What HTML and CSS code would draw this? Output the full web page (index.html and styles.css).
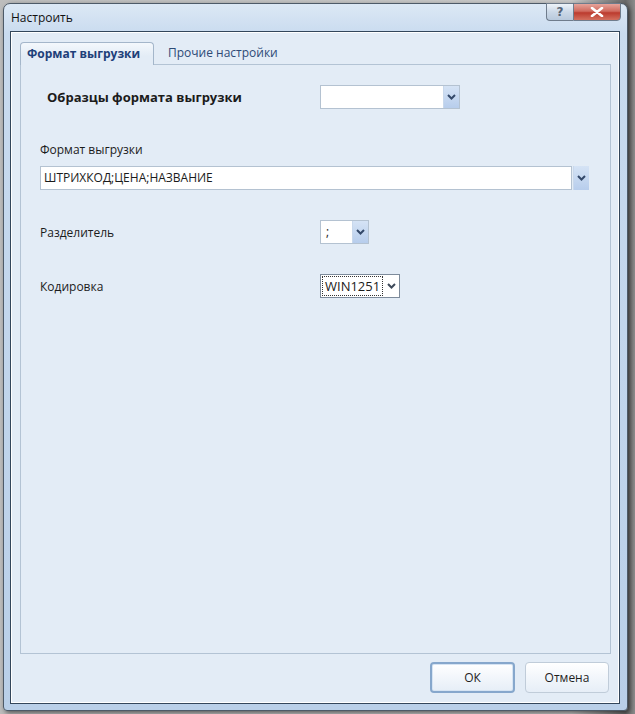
FILE: index.html
```html
<!DOCTYPE html>
<html lang="ru">
<head>
  <meta charset="UTF-8">
  <title>Настроить</title>
  <link rel="stylesheet" href="styles.css">
</head>
<body>

<div class="window">
  <!-- Title bar -->
  <div class="titlebar">
    <span class="title">Настроить</span>
    <div class="caption-buttons">
      <span class="cap-btn help">?</span>
      <span class="cap-btn close">
        <svg width="14" height="10" viewBox="0 0 14 10"><path d="M2 1 L12 9 M12 1 L2 9" stroke="#fff" stroke-width="2.6" stroke-linecap="round"/></svg>
      </span>
    </div>
  </div>

  <div class="client">
    <!-- Tabs -->
    <div class="tabs">
      <span class="tab active">Формат выгрузки</span>
      <span class="tab">Прочие настройки</span>
    </div>

    <div class="panel">
      <div class="row row-sample">
        <span class="label bold">Образцы формата выгрузки</span>
        <div class="combo combo-sample">
          <span class="combo-text"></span>
          <span class="drop"><svg width="9" height="6" viewBox="0 0 9 6"><path d="M1 1 L4.5 4.5 L8 1" fill="none" stroke="#34496a" stroke-width="2"/></svg></span>
        </div>
      </div>

      <div class="field-label">Формат выгрузки</div>
      <div class="format-line">
        <div class="text-input">ШТРИХКОД;ЦЕНА;НАЗВАНИЕ</div>
        <span class="drop drop-alone"><svg width="9" height="6" viewBox="0 0 9 6"><path d="M1 1 L4.5 4.5 L8 1" fill="none" stroke="#34496a" stroke-width="2"/></svg></span>
      </div>

      <div class="row row-sep">
        <span class="label">Разделитель</span>
        <div class="combo combo-sep">
          <span class="combo-text">;</span>
          <span class="drop"><svg width="9" height="6" viewBox="0 0 9 6"><path d="M1 1 L4.5 4.5 L8 1" fill="none" stroke="#34496a" stroke-width="2"/></svg></span>
        </div>
      </div>

      <div class="row row-enc">
        <span class="label">Кодировка</span>
        <div class="combo combo-enc">
          <span class="combo-text focus">WIN1251</span>
          <span class="drop plain"><svg width="9" height="6" viewBox="0 0 9 6"><path d="M1 1 L4.5 4.5 L8 1" fill="none" stroke="#3e4a5a" stroke-width="2"/></svg></span>
        </div>
      </div>
    </div>

    <!-- Dialog buttons -->
    <div class="footer">
      <span class="btn default">ОК</span>
      <span class="btn">Отмена</span>
    </div>
  </div>
</div>

</body>
</html>
```

FILE: styles.css
```css
/* Page reset */
html, body {
  margin: 0;
  padding: 0;
}

body {
  width: 635px;
  height: 714px;
  overflow: hidden;
  background: linear-gradient(to right, #bdbdbd 0%, #c9c9c9 90%, #6a6a6a 98.5%, #8c8c8c 100%);
  font-family: 'Open Sans', 'Noto Sans', sans-serif;
  font-size: 12px;
  color: #1b1b1b;
  padding: 3px 0 0 3px;
  box-sizing: border-box;
}

/* Window frame */
.window {
  width: 625px;
  height: 708px;
  box-sizing: border-box;
  border: 1px solid #4d5a68;
  border-radius: 7px 7px 4px 4px;
  background: linear-gradient(to bottom, #dce8f5 0px, #c9dbef 30px, #b9cfe8 100%);
  box-shadow: 2px 2px 5px rgba(0, 0, 0, 0.55);
  display: flex;
  flex-direction: column;
}

.titlebar {
  height: 27px;
  display: flex;
  justify-content: space-between;
  align-items: flex-start;
  padding: 0 6px 0 7px;
}

.title {
  font-size: 12px;
  line-height: 27px;
  color: #111;
}

.caption-buttons {
  display: flex;
  margin-top: -1px;
}

.cap-btn {
  height: 18px;
  box-sizing: border-box;
  border: 1px solid #6f7c8c;
  display: flex;
  align-items: center;
  justify-content: center;
}

.cap-btn.help {
  width: 27px;
  border-right: none;
  border-radius: 0 0 0 4px;
  background: linear-gradient(to bottom, #eef3f9, #cbd8e7 50%, #b8c9dc);
  color: #556477;
  font-family: 'DejaVu Sans', sans-serif;
  font-weight: bold;
  font-size: 12px;
}

.cap-btn.close {
  width: 48px;
  border-radius: 0 0 4px 0;
  background: linear-gradient(to bottom, #e6a49b, #d06a5e 45%, #bc3b2e 55%, #d3705f);
}

/* Client area */
.client {
  flex: 1;
  margin: 0 7px 6px 6px;
  border: 1px solid #33465b;
  box-shadow: inset 0 0 0 1px #ffffff;
  background: #e3ecf6;
  padding: 10px 8px 10px 9px;
  display: flex;
  flex-direction: column;
}

.tabs {
  display: flex;
  height: 22px;
  position: relative;
  z-index: 1;
}

.tab {
  padding: 0 7px;
  line-height: 21px;
  color: #2d4a76;
  font-size: 12px;
}

.tab.active {
  width: 134px;
  box-sizing: border-box;
  padding: 0 6px;
  height: 23px;
  border: 1px solid #a4b6ca;
  border-bottom: none;
  border-radius: 4px 4px 0 0;
  background: linear-gradient(to bottom, #f4f8fc, #e3ecf6 60%);
  font-weight: bold;
  color: #1e4079;
  margin-right: 7px;
}

.panel {
  flex: 1;
  border: 1px solid #b3c3d4;
  background: #e3ecf6;
  padding: 20px 0 0 19px;
}

.row {
  display: flex;
  align-items: center;
  height: 24px;
}

.label {
  width: 280px;
  font-size: 12px;
}

.label.bold {
  font-weight: bold;
  font-size: 13px;
  padding-left: 7px;
  width: 273px;
}

.field-label {
  margin-top: 33px;
  line-height: 16px;
}

.format-line {
  display: flex;
  margin-top: 8px;
  height: 24px;
}

.text-input {
  width: 532px;
  box-sizing: border-box;
  border: 1px solid #b4c2d1;
  background: #fff;
  padding-left: 3px;
  line-height: 22px;
}

.row-sep, .row-enc {
  margin-top: 30px;
}

/* Combo boxes */
.combo {
  display: flex;
  height: 24px;
  box-sizing: border-box;
  border: 1px solid #b4c2d1;
  background: #fff;
}

.combo-text {
  flex: 1;
  line-height: 22px;
  padding-left: 5px;
}

.combo-sample {
  width: 140px;
}

.combo-sep {
  width: 49px;
}

.combo-enc {
  width: 80px;
  height: 24px;
  border-color: #7d8b9b;
}

.combo-text.focus {
  flex: none;
  margin: 1px 0 1px 1px;
  padding: 0 2px 0 2px;
  line-height: 18px;
  border: 1px dotted #333;
  font-size: 13px;
}

.drop {
  width: 16px;
  display: flex;
  align-items: center;
  justify-content: center;
  background: linear-gradient(to bottom, #d5e3f5, #b7cdec);
  box-shadow: inset 1px 0 0 #c8d8ec;
}

.drop-alone {
  margin-left: 1px;
  height: 24px;
}

.drop.plain {
  background: none;
  box-shadow: none;
  flex: 1;
}

/* Dialog footer */
.footer {
  display: flex;
  justify-content: flex-end;
  gap: 10px;
  padding: 8px 2px 0 0;
}

.btn {
  width: 84px;
  height: 31px;
  box-sizing: border-box;
  border: 1px solid #c0ccd9;
  border-radius: 4px;
  background: linear-gradient(to bottom, #ffffff, #f2f6fb 50%, #e6eef7);
  display: flex;
  align-items: center;
  justify-content: center;
  color: #1e1e1e;
}

.btn.default {
  border: 2px solid #86a7cc;
  box-shadow: inset 0 0 0 1px #d6e4f3;
  width: 85px;
}
```
